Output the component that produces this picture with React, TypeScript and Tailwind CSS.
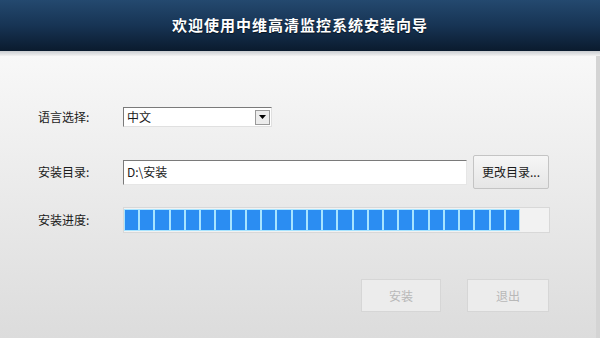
import React from "react";

const font = { fontFamily: '"Noto Sans CJK SC", "Liberation Sans", sans-serif' };

export default function App() {
  const blocks = Array.from({ length: 26 });
  return (
    <div className="w-[600px] h-[338px] overflow-hidden flex flex-col relative" style={font}>
      <div className="h-[51px] shrink-0 bg-gradient-to-b from-[#24496f] via-[#173454] to-[#0a1b2e] flex items-center justify-center">
        <span className="text-white text-[15px] font-bold tracking-[1px] [text-shadow:0_1px_1px_rgba(0,0,0,0.6)]">
          欢迎使用中维高清监控系统安装向导
        </span>
      </div>
      <div className="h-[5px] shrink-0 bg-gradient-to-b from-[#c9ccd0] to-[#f2f2f2]" />
      <div className="flex-1 bg-gradient-to-b from-[#f8f8f8] to-[#dcdcdc] flex flex-col pl-[38px] pt-[51px] border-r-[4px] border-[#d4d4d4] text-[12px] text-[#1a1a1a]">
        <div className="flex items-center h-[20px]">
          <span className="w-[85px]">语言选择:</span>
          <div className="w-[149px] h-[20px] bg-white border border-[#7a7a7a] border-b-[#e0e0e0] border-r-[#e0e0e0] flex items-center justify-between pl-[3px] pr-[1px]">
            <span>中文</span>
            <div className="w-[15px] h-[15px] bg-[#ececec] border border-[#9a9a9a] flex items-center justify-center">
              <svg width="7" height="4" viewBox="0 0 7 4"><path d="M0 0H7L3.5 4Z" fill="#000" /></svg>
            </div>
          </div>
        </div>
        <div className="flex items-center h-[34px] mt-[28px]">
          <span className="w-[85px]">安装目录:</span>
          <div className="w-[344px] h-[25px] bg-white border border-[#7a7a7a] border-b-[#e6e6e6] border-r-[#e6e6e6] flex items-center pl-[3px]">
            D:\安装
          </div>
          <div className="ml-[6px] w-[76px] h-[34px] rounded-[2px] border border-[#c4c4c4] bg-gradient-to-b from-[#f6f6f6] to-[#e6e6e6] flex items-center justify-center">
            更改目录...
          </div>
        </div>
        <div className="flex items-center h-[26px] mt-[18px]">
          <span className="w-[85px]">安装进度:</span>
          <div className="w-[427px] h-[26px] bg-[#f2f2f2] border border-[#d8d8d8] flex items-stretch p-[2px] pl-[1px]">
            <div className="w-[394px] flex items-stretch gap-[2px]">
              {blocks.map((_, i) => (
                <div key={i} className="flex-1 bg-[#2b8df2] outline outline-1 outline-[#a8e4ff]" />
              ))}
            </div>
          </div>
        </div>
        <div className="flex mt-[46px] pl-[323px] gap-[26px]">
          <div className="w-[80px] h-[33px] border border-[#d6d6d6] bg-[#ececec] flex items-center justify-center text-[#b8b8b8]">安装</div>
          <div className="w-[82px] h-[33px] border border-[#d6d6d6] bg-[#ececec] flex items-center justify-center text-[#b8b8b8]">退出</div>
        </div>
      </div>
    </div>
  );
}
